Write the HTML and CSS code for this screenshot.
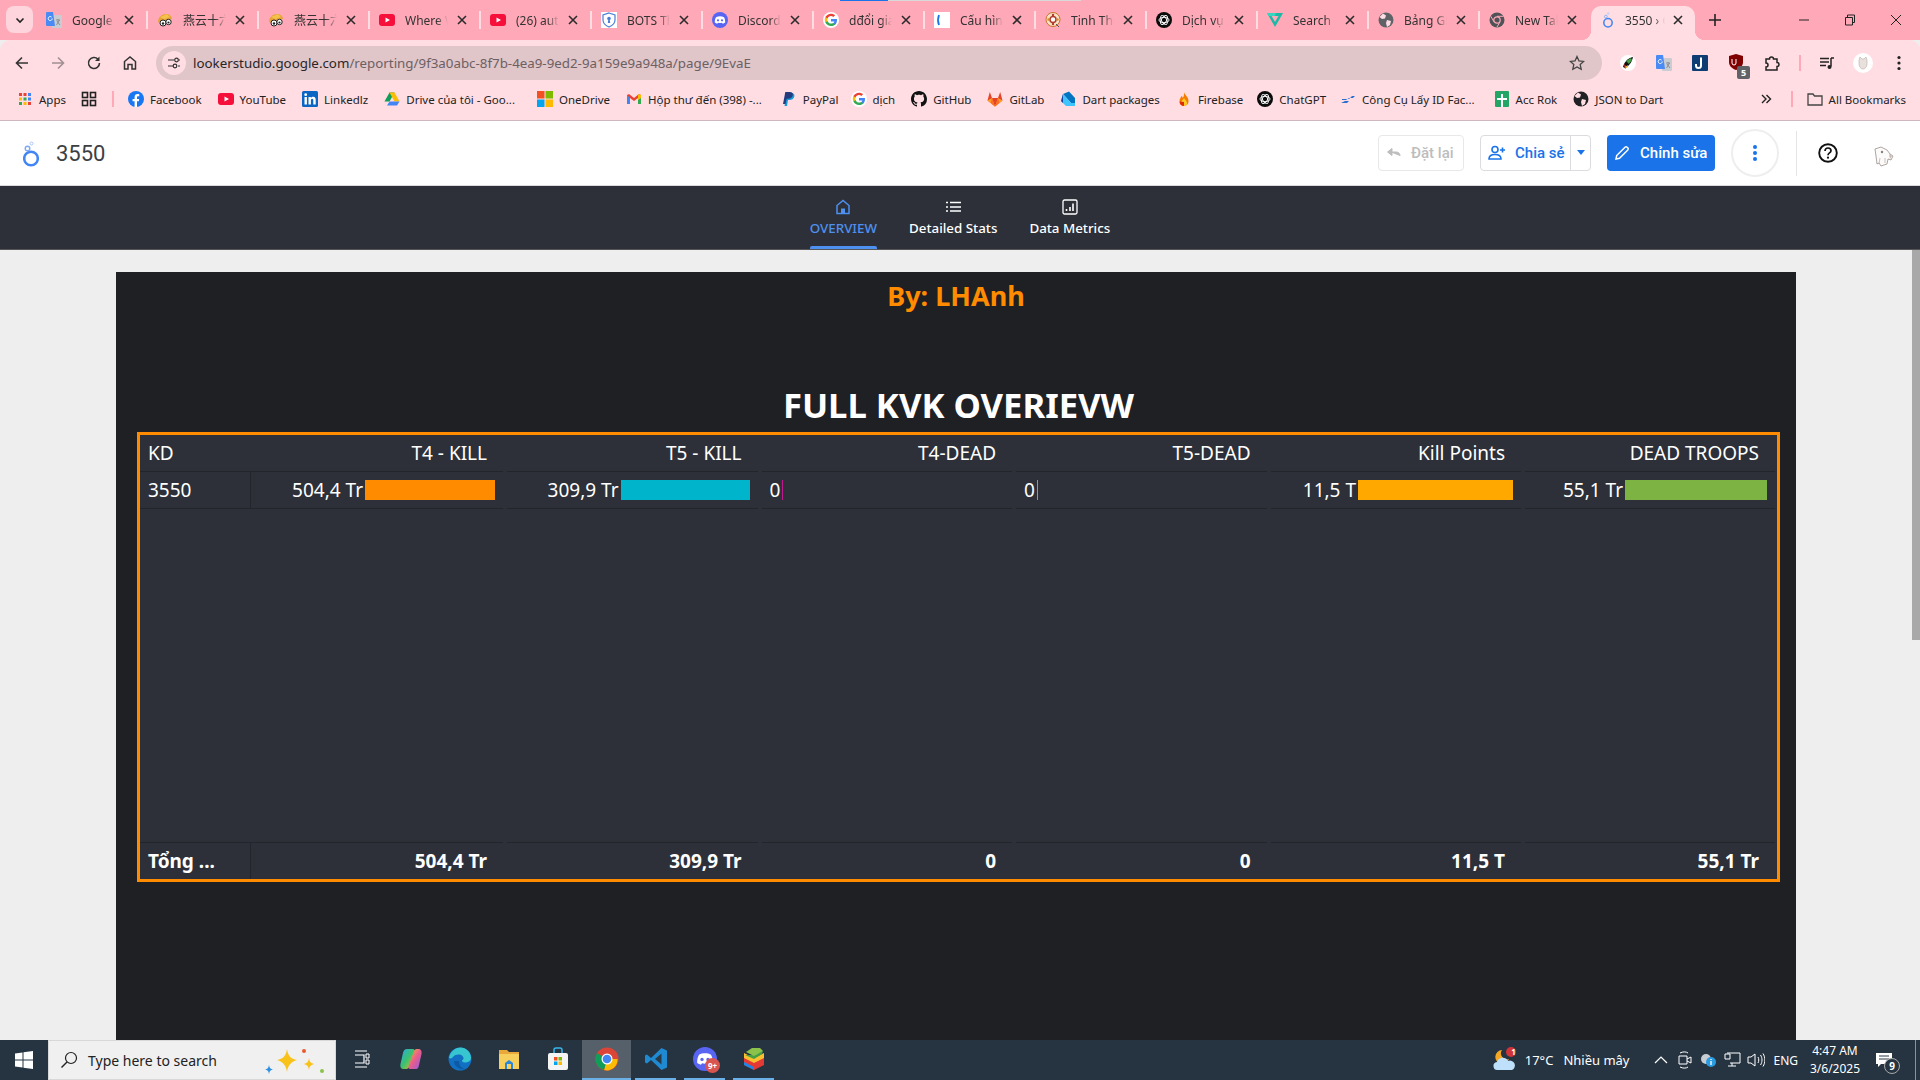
FILE: index.html
```html
<!DOCTYPE html>
<html lang="vi">
<head>
<meta charset="utf-8">
<title>3550</title>
<link rel="stylesheet" href="styles.css">
</head>
<body>
<svg class="defs" width="0" height="0" aria-hidden="true">
<defs>
<symbol id="i-x" viewBox="0 0 10 10"><path d="M1 1l8 8M9 1L1 9" stroke="#2b2b2b" stroke-width="1.6" fill="none"/></symbol>
<symbol id="i-translate" viewBox="0 0 16 16"><rect x="6" y="3" width="10" height="13" rx="1" fill="#c9cdd2"/><path d="M10 8h4M12 7v1M10.500 13l3-5M11 9l3 4" stroke="#7d8287" stroke-width=".8" fill="none"/><path d="M1 0h6l2 14H1a1 1 0 0 1-1-1V1a1 1 0 0 1 1-1z" fill="#4a8af4"/><path d="M6.200 6.500a2 2 0 1 1-.6-1.400" stroke="#fff" stroke-width="1" fill="none"/></symbol>
<symbol id="i-mascot" viewBox="0 0 16 16"><path d="M1 10c0-5 4-8 8-8 3 0 6 2 6 5l-6 1-5 3z" fill="#e7a33a"/><path d="M3 5l7-3 3 3-6 2z" fill="#f2c24b"/><circle cx="6" cy="11" r="3" fill="#fff" stroke="#222"/><circle cx="11.500" cy="10" r="2.700" fill="#fff" stroke="#222"/><circle cx="6" cy="11.500" r="1.200" fill="#222"/><circle cx="11.500" cy="10.500" r="1.100" fill="#222"/></symbol>
<symbol id="i-yt" viewBox="0 0 16 16"><rect y="2" width="16" height="12" rx="3" fill="#f50f3a"/><path d="M6.500 5.500v5L11 8z" fill="#fff"/></symbol>
<symbol id="i-shield" viewBox="0 0 16 16"><rect width="16" height="16" fill="#fff"/><path d="M8 1l6 2v5c0 3.500-2.500 5.500-6 7-3.500-1.500-6-3.500-6-7V3z" fill="#fff" stroke="#4a7fd4" stroke-width="1.200"/><circle cx="8" cy="6.500" r="1.800" fill="#4a7fd4"/><path d="M7.300 7.500h1.400l.5 3.500H6.800z" fill="#4a7fd4"/></symbol>
<symbol id="i-discord" viewBox="0 0 16 16"><circle cx="8" cy="8" r="8" fill="#5865f2"/><path d="M4 5.200c2.500-1.300 5.500-1.300 8 0 1 1.800 1.300 3.600 1.200 5.400-.8.600-1.600 1-2.500 1.200l-.7-1c-1.300.4-2.700.4-4 0l-.7 1c-.9-.2-1.700-.6-2.500-1.200C2.700 8.800 3 7 4 5.200z" fill="#fff"/><circle cx="6" cy="8.300" r="1.100" fill="#5865f2"/><circle cx="10" cy="8.300" r="1.100" fill="#5865f2"/></symbol>
<symbol id="i-g" viewBox="0 0 16 16"><circle cx="8" cy="8" r="8" fill="#fff"/><path d="M14 8.200c0-.5 0-.9-.1-1.300H8v2.500h3.400c-.2.800-.6 1.400-1.300 1.900v1.500h2c1.200-1.100 1.900-2.700 1.900-4.600z" fill="#4285f4"/><path d="M8 14c1.700 0 3-.5 4.100-1.500l-2-1.500c-.6.400-1.300.6-2.100.6-1.600 0-3-1.100-3.500-2.600H2.400v1.600C3.500 12.700 5.600 14 8 14z" fill="#34a853"/><path d="M4.500 9c-.3-.8-.3-1.600 0-2.400V5H2.400c-.8 1.700-.8 3.700 0 5.400z" fill="#fbbc05"/><path d="M8 4.100c.9 0 1.700.3 2.300.9L12.100 3.200C11 2.200 9.600 1.700 8 1.700 5.600 1.700 3.500 3 2.400 5l2.100 1.600C5 5.200 6.400 4.100 8 4.100z" fill="#ea4335"/></symbol>
<symbol id="i-cau" viewBox="0 0 16 16"><rect width="16" height="16" fill="#fff"/><path d="M5 3C3.800 6 3.800 10 5 13" stroke="#1a73e8" stroke-width="1.800" fill="none"/></symbol>
<symbol id="i-wheel" viewBox="0 0 16 16"><circle cx="8" cy="7.500" r="7" fill="#f8e2c6" stroke="#c9722d"/><circle cx="8" cy="7.500" r="3" fill="#fff" stroke="#b13b2b" stroke-width="1.500"/><circle cx="8" cy="3" r="1.200" fill="#b13b2b"/><circle cx="12.500" cy="7.500" r="1.200" fill="#d68a2d"/><circle cx="3.500" cy="7.500" r="1.200" fill="#d68a2d"/><circle cx="8" cy="12" r="1.200" fill="#b13b2b"/><path d="M11 12l3 3" stroke="#555"/></symbol>
<symbol id="i-gpt" viewBox="0 0 16 16"><circle cx="8" cy="8" r="8" fill="#0b0b0b"/><g fill="none" stroke="#fff" stroke-width=".9"><ellipse cx="8" cy="8" rx="5" ry="2.600"/><ellipse cx="8" cy="8" rx="5" ry="2.600" transform="rotate(60 8 8)"/><ellipse cx="8" cy="8" rx="5" ry="2.600" transform="rotate(120 8 8)"/></g></symbol>
<symbol id="i-vuet" viewBox="0 0 16 16"><path d="M0 1h16L8 15z" fill="#1bb9a6"/><path d="M4.500 4h7L8 10z" fill="#ffa9b8"/><path d="M0 1h9L8 4H2z" fill="#37d6c0"/></symbol>
<symbol id="i-globe" viewBox="0 0 16 16"><circle cx="8" cy="8" r="7.500" fill="#5f6368"/><path d="M5 1.500l3 2-1 3-3 .5-2.500-2zM9 8l4 1-1 4-3 2-1-4z" fill="#ffdde3"/></symbol>
<symbol id="i-chrome-m" viewBox="0 0 16 16"><circle cx="8" cy="8" r="7.500" fill="#4f5256"/><circle cx="8" cy="8" r="3.200" fill="#4f5256" stroke="#ffa9b8" stroke-width="1.200"/><path d="M8 4.300h6.500M5 9.800L1.800 4.300M11 9.800L8 15" stroke="#ffa9b8" stroke-width="1"/></symbol>
<symbol id="i-looker" viewBox="0 0 16 26"><circle cx="8" cy="17.500" r="6.800" fill="none" stroke="#4285f4" stroke-width="2.500"/><circle cx="4.500" cy="7.500" r="2.300" fill="none" stroke="#7fa9f5" stroke-width="1.400"/><circle cx="8.500" cy="2.500" r="1.500" fill="none" stroke="#aac6f8" stroke-width="1"/></symbol>
<symbol id="i-fb" viewBox="0 0 16 16"><circle cx="8" cy="8" r="8" fill="#1877f2"/><path d="M10.800 10.300l.4-2.300H9V6.500c0-.7.300-1.200 1.300-1.200h1V3.300S10.400 3.100 9.500 3.100C7.700 3.100 6.600 4.200 6.600 6.200V8h-2v2.300h2V16h2.400v-5.700z" fill="#fff"/></symbol>
<symbol id="i-in" viewBox="0 0 16 16"><rect width="16" height="16" rx="1.500" fill="#0a66c2"/><rect x="2.500" y="6" width="2.400" height="7.500" fill="#fff"/><circle cx="3.700" cy="3.700" r="1.400" fill="#fff"/><path d="M6.500 6h2.300v1.100C9.200 6.400 10 5.800 11.200 5.800c2 0 2.500 1.300 2.500 3.200v4.500h-2.400v-4c0-1-.2-1.700-1.100-1.700-1 0-1.300.7-1.300 1.700v4H6.500z" fill="#fff"/></symbol>
<symbol id="i-drive" viewBox="0 0 16 16"><path d="M5.500 1.500h5L5.500 10.500H0.500z" fill="#0f9d58"/><path d="M10.500 1.500l5 9h-5l-5-9z" fill="#fbbc04"/><path d="M3 14.500l2.500-4h10l-2.500 4z" fill="#4285f4"/></symbol>
<symbol id="i-ms" viewBox="0 0 16 16"><rect width="7.500" height="7.500" fill="#f25022"/><rect x="8.500" width="7.500" height="7.500" fill="#7fba00"/><rect y="8.500" width="7.500" height="7.500" fill="#00a4ef"/><rect x="8.500" y="8.500" width="7.500" height="7.500" fill="#ffb900"/></symbol>
<symbol id="i-gmail" viewBox="0 0 16 16"><path d="M1 4v9h3V7l4 3 4-3v6h3V4l-2-1-5 4-5-4z" fill="#ea4335"/><path d="M1 4v9h3V7z" fill="#4285f4"/><path d="M15 4v9h-3V7z" fill="#34a853"/><path d="M13 3l2 1v3l-3 2V4z" fill="#fbbc04"/></symbol>
<symbol id="i-paypal" viewBox="0 0 16 16"><path d="M6 15H3.500L5.800 2h4.500c2.500 0 3.500 1.500 3 3.500-.6 2.500-2.500 3.500-5 3.500H7z" fill="#169bd7"/><path d="M4.500 13H2L4.300 1h4.500c2.500 0 3.500 1.300 3 3.300-.5 2.500-2.500 3.400-5 3.400H5.600z" fill="#253b80"/></symbol>
<symbol id="i-gh" viewBox="0 0 16 16"><path fill="#111" d="M8 0C3.580 0 0 3.580 0 8c0 3.540 2.290 6.530 5.470 7.590.4.070.55-.17.55-.38 0-.19-.01-.82-.01-1.490-2.010.37-2.530-.49-2.690-.94-.09-.23-.48-.94-.82-1.130-.28-.15-.68-.52-.01-.53.63-.01 1.080.58 1.230.82.72 1.210 1.870.87 2.330.66.07-.52.28-.87.51-1.070-1.780-.2-3.640-.89-3.640-3.950 0-.87.31-1.590.82-2.150-.08-.2-.36-1.020.08-2.120 0 0 .67-.21 2.200.82.64-.18 1.320-.27 2-.27s1.360.09 2 .27c1.530-1.040 2.200-.82 2.200-.82.44 1.100.16 1.920.08 2.120.51.56.82 1.270.82 2.150 0 3.070-1.870 3.750-3.650 3.950.29.25.54.73.54 1.480 0 1.070-.01 1.930-.01 2.200 0 .21.15.46.55.38A8.013 8.013 0 0 0 16 8c0-4.420-3.580-8-8-8z"/></symbol>
<symbol id="i-gl" viewBox="0 0 16 16"><path d="M8 15.500L.5 9.500 2.800 1l2.200 6h6l2.200-6 2.300 8.500z" fill="#e24329"/><path d="M8 15.500L5 7h6z" fill="#e24329"/><path d="M8 15.500L.5 9.500 5 7zM8 15.500l7.500-6L11 7z" fill="#fca326"/><path d="M8 15.500L3.500 11.500 5 7zM8 15.500l4.500-4L11 7z" fill="#fc6d26"/></symbol>
<symbol id="i-dart" viewBox="0 0 16 16"><path d="M3 3l6-2.500 6 6.500v5h-4z" fill="#0175c2"/><path d="M3 3l8 9h4v3H6L1 10z" fill="#40c4ff"/><path d="M3 3L1 10l2 2z" fill="#0d47a1"/></symbol>
<symbol id="i-fire" viewBox="0 0 16 16"><path d="M8 1c.5 3 4.500 4.500 4.500 9A4.500 4.500 0 0 1 8 15a4.500 4.500 0 0 1-4.500-5C3.500 7.500 5 6.500 5.500 5c1 .7 1.200 1.500 1.200 2C8 5.500 8.300 3 8 1z" fill="#f57c00"/><path d="M8 7c1 2 3 3 3 5a3 3 0 0 1-6 0c0-2 2-3 3-5z" fill="#ffca28"/><path d="M3.700 10.500A4.500 4.500 0 0 0 8 15v-4z" fill="#dd2c00"/></symbol>
<symbol id="i-cc" viewBox="0 0 16 16"><path d="M2 8h7l3-3h3l-2 2H9L6 9H2z" fill="#2a6fd0"/><path d="M1 12h6l2-2H5z" fill="#2a6fd0"/></symbol>
<symbol id="i-sheet" viewBox="0 0 16 16"><rect x="1" width="14" height="16" rx="1" fill="#23a566"/><path d="M7 3h2v4h4v2H9v7H7V9H3V7h4z" fill="#fff"/></symbol>
<symbol id="i-globe-d" viewBox="0 0 16 16"><circle cx="8" cy="8" r="7.500" fill="#202124"/><path d="M5 1.500l3 2-1 3-3 .5-2.500-2zM9 8l4 1-1 4-3 2-1-4z" fill="#ffdde3"/></symbol>
</defs>
</svg>

<div class="window">
  <div class="strip">
    <div class="tab-search"><svg width="12" height="12" viewBox="0 0 12 12"><path d="M2.500 4.500L6 8l3.500-3.500" fill="none" stroke="#222" stroke-width="1.600"/></svg></div>
    <div class="tabs">
      <div class="tab"><div class="tab-in"><svg class="fav"><use href="#i-translate"/></svg><span class="tab-t">Google T</span><svg class="x"><use href="#i-x"/></svg></div></div>
      <div class="tab"><div class="tab-in"><svg class="fav"><use href="#i-mascot"/></svg><span class="tab-t">燕云十六声</span><svg class="x"><use href="#i-x"/></svg></div></div>
      <div class="tab"><div class="tab-in"><svg class="fav"><use href="#i-mascot"/></svg><span class="tab-t">燕云十六声</span><svg class="x"><use href="#i-x"/></svg></div></div>
      <div class="tab"><div class="tab-in"><svg class="fav"><use href="#i-yt"/></svg><span class="tab-t">Where W</span><svg class="x"><use href="#i-x"/></svg></div></div>
      <div class="tab"><div class="tab-in"><svg class="fav"><use href="#i-yt"/></svg><span class="tab-t">(26) auto</span><svg class="x"><use href="#i-x"/></svg></div></div>
      <div class="tab"><div class="tab-in"><svg class="fav"><use href="#i-shield"/></svg><span class="tab-t">BOTS Th</span><svg class="x"><use href="#i-x"/></svg></div></div>
      <div class="tab"><div class="tab-in"><svg class="fav"><use href="#i-discord"/></svg><span class="tab-t">Discord</span><svg class="x"><use href="#i-x"/></svg></div></div>
      <div class="tab"><div class="tab-in"><svg class="fav"><use href="#i-g"/></svg><span class="tab-t">dđổi giao</span><svg class="x"><use href="#i-x"/></svg></div></div>
      <div class="tab"><div class="tab-in"><svg class="fav"><use href="#i-cau"/></svg><span class="tab-t">Cấu hình</span><svg class="x"><use href="#i-x"/></svg></div></div>
      <div class="tab"><div class="tab-in"><svg class="fav"><use href="#i-wheel"/></svg><span class="tab-t">Tinh Thể</span><svg class="x"><use href="#i-x"/></svg></div></div>
      <div class="tab"><div class="tab-in"><svg class="fav"><use href="#i-gpt"/></svg><span class="tab-t">Dịch vụ</span><svg class="x"><use href="#i-x"/></svg></div></div>
      <div class="tab"><div class="tab-in"><svg class="fav"><use href="#i-vuet"/></svg><span class="tab-t">Search</span><svg class="x"><use href="#i-x"/></svg></div></div>
      <div class="tab"><div class="tab-in"><svg class="fav"><use href="#i-globe"/></svg><span class="tab-t">Bảng Gi</span><svg class="x"><use href="#i-x"/></svg></div></div>
      <div class="tab tab-last"><div class="tab-in"><svg class="fav"><use href="#i-chrome-m"/></svg><span class="tab-t">New Tab</span><svg class="x"><use href="#i-x"/></svg></div></div>
      <div class="tab tab-active"><div class="tab-in"><svg class="fav"><use href="#i-looker"/></svg><span class="tab-t">3550 › Ch</span><svg class="x"><use href="#i-x"/></svg></div></div>
    </div>
    <svg class="plus" width="14" height="14" viewBox="0 0 14 14"><path d="M7 1v12M1 7h12" stroke="#222" stroke-width="1.600"/></svg>
    <div class="winctl">
      <svg width="12" height="12" viewBox="0 0 12 12"><path d="M1 6h10" stroke="#222"/></svg>
      <svg width="12" height="12" viewBox="0 0 12 12"><path d="M3.500 3V1h7v7.500H8.500M1.500 3.500h7v7.500h-7z" fill="none" stroke="#222"/></svg>
      <svg width="12" height="12" viewBox="0 0 12 12"><path d="M1 1l10 10M11 1L1 11" stroke="#222"/></svg>
    </div>
  </div>
  <div class="line-progress"></div>

  <div class="toolbar">
    <div class="tb"><svg width="16" height="16" viewBox="0 0 16 16"><path d="M14 8H2.500M8 2.500L2.500 8 8 13.500" fill="none" stroke="#333" stroke-width="1.600"/></svg></div>
    <div class="tb"><svg width="16" height="16" viewBox="0 0 16 16"><path d="M2 8h11.500M8 2.500L13.500 8 8 13.500" fill="none" stroke="#a08f93" stroke-width="1.600"/></svg></div>
    <div class="tb"><svg width="16" height="16" viewBox="0 0 16 16"><path d="M13.500 8A5.500 5.500 0 1 1 12 4.200" fill="none" stroke="#333" stroke-width="1.600"/><path d="M13.500 1.500V6H9z" fill="#333"/></svg></div>
    <div class="tb"><svg width="16" height="16" viewBox="0 0 16 16"><path d="M2.500 14V6.500L8 2l5.500 4.500V14H10V9.500H6V14z" fill="none" stroke="#333" stroke-width="1.500"/></svg></div>
    <div class="omni">
      <div class="site"><svg width="14" height="14" viewBox="0 0 14 14"><g fill="none" stroke="#333" stroke-width="1.200"><path d="M1 4h6M11 10h2M1 10h5"/><circle cx="9.500" cy="4" r="1.800"/><circle cx="8" cy="10" r="1.800"/><path d="M11.500 4H13"/></g></svg></div>
      <div class="url"><span class="host">lookerstudio.google.com</span>/reporting/9f3a0abc-8f7b-4ea9-9ed2-9a159e9a948a/page/9EvaE</div>
      <svg class="star" width="16" height="16" viewBox="0 0 16 16"><path d="M8 1.500l2 4.400 4.700.5-3.500 3.200 1 4.700L8 12l-4.200 2.300 1-4.700L1.300 6.400 6 5.900z" fill="none" stroke="#444" stroke-width="1.300"/></svg>
    </div>
    <div class="tb"><svg width="16" height="16" viewBox="0 0 16 16"><circle cx="8" cy="8" r="8" fill="#fff"/><path d="M3 12C4 7 8 3 13 2c-1 5-4 9-8 11z" fill="#111"/><path d="M4 9l3 3-2 2z" fill="#e53935"/><path d="M6 6l3 3 3-4-1-2z" fill="#43a047"/><path d="M5 12l3-2-1 3z" fill="#fbc02d"/></svg></div>
    <div class="tb"><svg class="fav"><use href="#i-translate"/></svg></div>
    <div class="tb"><svg width="16" height="16" viewBox="0 0 16 16"><rect width="16" height="16" rx="1" fill="#0f3d73"/><path d="M9 2.500v8a2.500 2.500 0 0 1-5 0V9" fill="none" stroke="#fff" stroke-width="2"/></svg></div>
    <div class="tb tb-ub"><svg width="16" height="16" viewBox="0 0 16 16"><path d="M8 0l7 2v6c0 4-3 6.500-7 8-4-1.500-7-4-7-8V2z" fill="#800000"/><path d="M4 5v4a2 2 0 0 0 4 0V5" stroke="#fff" stroke-width="1" fill="none"/></svg><span class="ub-badge">5</span></div>
    <div class="tb"><svg width="18" height="18" viewBox="0 0 18 18"><path d="M3 5h3.500a2 2 0 0 1 4 0H14v3.500a2 2 0 0 1 0 4V16H3v-3a2 2 0 0 0 0-4z" fill="none" stroke="#222" stroke-width="1.500"/></svg></div>
    <div class="tb-sep"></div>
    <div class="tb"><svg width="16" height="16" viewBox="0 0 16 16"><path d="M1 3.500h9M1 7h9M1 10.500h6" stroke="#222" stroke-width="1.500"/><path d="M12 3v8.500" stroke="#222" stroke-width="1.500"/><circle cx="10.500" cy="12" r="2" fill="#222"/><path d="M12 3h3" stroke="#222" stroke-width="1.500"/></svg></div>
    <div class="tb"><svg width="20" height="20" viewBox="0 0 20 20"><circle cx="10" cy="10" r="10" fill="#fff"/><path d="M6 7l1-3 2 2h2l2-2 1 3v4c0 3-2 5-4 5s-4-2-4-5z" fill="#e8e0dc" stroke="#b9aca6" stroke-width=".6"/></svg></div>
    <div class="tb"><svg width="4" height="16" viewBox="0 0 4 16"><circle cx="2" cy="2.500" r="1.600" fill="#222"/><circle cx="2" cy="8" r="1.600" fill="#222"/><circle cx="2" cy="13.500" r="1.600" fill="#222"/></svg></div>
  </div>

  <div class="bookmarks">
    <div class="bm"><svg class="fav" viewBox="0 0 16 16"><g><rect x="2" y="2" width="3" height="3" fill="#ea4335"/><rect x="6.500" y="2" width="3" height="3" fill="#ea4335"/><rect x="11" y="2" width="3" height="3" fill="#4285f4"/><rect x="2" y="6.500" width="3" height="3" fill="#fbbc04"/><rect x="6.500" y="6.500" width="3" height="3" fill="#34a853"/><rect x="11" y="6.500" width="3" height="3" fill="#4285f4"/><rect x="2" y="11" width="3" height="3" fill="#34a853"/><rect x="6.500" y="11" width="3" height="3" fill="#fbbc04"/><rect x="11" y="11" width="3" height="3" fill="#ea4335"/></g></svg><span>Apps</span></div>
    <svg class="fav bm-grid" viewBox="0 0 16 16"><g fill="none" stroke="#222" stroke-width="1.600"><rect x="1.500" y="1.500" width="5" height="5"/><rect x="9.500" y="1.500" width="5" height="5"/><rect x="1.500" y="9.500" width="5" height="5"/><rect x="9.500" y="9.500" width="5" height="5"/></g></svg>
    <div class="bm-sep"></div>
    <div class="bm"><svg class="fav"><use href="#i-fb"/></svg><span>Facebook</span></div>
    <div class="bm"><svg class="fav"><use href="#i-yt"/></svg><span>YouTube</span></div>
    <div class="bm"><svg class="fav"><use href="#i-in"/></svg><span>Linkedlz</span></div>
    <div class="bm bm-drive"><svg class="fav"><use href="#i-drive"/></svg><span>Drive của tôi - Goo...</span></div>
    <div class="bm"><svg class="fav"><use href="#i-ms"/></svg><span>OneDrive</span></div>
    <div class="bm bm-gmail"><svg class="fav"><use href="#i-gmail"/></svg><span>Hộp thư đến (398) -...</span></div>
    <div class="bm bm-paypal"><svg class="fav"><use href="#i-paypal"/></svg><span>PayPal</span></div>
    <div class="bm"><svg class="fav"><use href="#i-g"/></svg><span>dịch</span></div>
    <div class="bm"><svg class="fav"><use href="#i-gh"/></svg><span>GitHub</span></div>
    <div class="bm"><svg class="fav"><use href="#i-gl"/></svg><span>GitLab</span></div>
    <div class="bm"><svg class="fav"><use href="#i-dart"/></svg><span>Dart packages</span></div>
    <div class="bm bm-fire"><svg class="fav"><use href="#i-fire"/></svg><span>Firebase</span></div>
    <div class="bm bm-gpt"><svg class="fav"><use href="#i-gpt"/></svg><span>ChatGPT</span></div>
    <div class="bm bm-cc"><svg class="fav"><use href="#i-cc"/></svg><span>Công Cụ Lấy ID Fac...</span></div>
    <div class="bm"><svg class="fav"><use href="#i-sheet"/></svg><span>Acc Rok</span></div>
    <div class="bm"><svg class="fav"><use href="#i-globe-d"/></svg><span>JSON to Dart</span></div>
    <div class="bm-right">
      <svg width="12" height="12" viewBox="0 0 12 12"><path d="M2 2l4 4-4 4M6.500 2l4 4-4 4" fill="none" stroke="#222" stroke-width="1.400"/></svg>
      <div class="bm-sep"></div>
      <div class="bm"><svg class="fav" viewBox="0 0 16 16"><path d="M1 3h5l1.500 2H15v9H1z" fill="none" stroke="#444" stroke-width="1.300"/></svg><span>All Bookmarks</span></div>
    </div>
  </div>

  <header class="ls-head">
    <svg class="ls-logo" width="16" height="26"><use href="#i-looker"/></svg>
    <div class="ls-title">3550</div>
    <div class="ls-actions">
      <div class="btn btn-off"><svg width="16" height="16" viewBox="0 0 16 16"><path d="M4 7h6c2.500 0 4 1.500 4 4M1.500 7L6 3.500v7z" fill="#bdbdbd" stroke="#bdbdbd"/></svg><span>Đặt lại</span></div>
      <div class="btn-group">
        <div class="btn-main"><svg width="18" height="16" viewBox="0 0 18 16"><circle cx="7" cy="4.500" r="3" fill="none" stroke="#1a73e8" stroke-width="1.600"/><path d="M1 14c0-3 2.500-4.500 6-4.500s6 1.500 6 4.500z" fill="none" stroke="#1a73e8" stroke-width="1.600"/><path d="M14.500 2.500v5M12 5h5" stroke="#1a73e8" stroke-width="1.600"/></svg><span>Chia sẻ</span></div>
        <div class="btn-drop"><svg width="10" height="6" viewBox="0 0 10 6"><path d="M1 0h8L5 5z" fill="#1a73e8"/></svg></div>
      </div>
      <div class="btn-edit"><svg width="16" height="16" viewBox="0 0 16 16"><path d="M2 14l.7-3.500L11 2.200a1.500 1.500 0 0 1 2.100 0l.7.7a1.500 1.500 0 0 1 0 2.100L5.500 13.300z" fill="none" stroke="#fff" stroke-width="1.500"/></svg><span>Chỉnh sửa</span></div>
      <div class="btn-more"><svg width="4" height="16" viewBox="0 0 4 16"><circle cx="2" cy="2" r="2" fill="#1a73e8"/><circle cx="2" cy="8" r="2" fill="#1a73e8"/><circle cx="2" cy="14" r="2" fill="#1a73e8"/></svg></div>
      <div class="ls-sep"></div>
      <svg class="ls-help" width="20" height="20" viewBox="0 0 20 20"><circle cx="10" cy="10" r="8.800" fill="none" stroke="#111" stroke-width="1.900"/><path d="M7 8c0-1.800 1.300-3 3-3s3 1.100 3 2.700c0 2.200-3 2.300-3 4.500" fill="none" stroke="#111" stroke-width="1.700"/><circle cx="10" cy="14.700" r="1.100" fill="#111"/></svg>
      <svg class="ls-avatar" width="26" height="26" viewBox="0 0 26 26"><path d="M5 6l6-2 6 3 3 4 3 2-2 4-3-1-1 5-6 2-2-3-2 1-1-8z" fill="#fbfbfb" stroke="#9c8e88" stroke-width=".8"/><circle cx="12" cy="9" r="1.200" fill="#8d7d77"/><path d="M19 11l3 2-2 3z" fill="#c7b8b0"/><path d="M9 21l1-6M15 20l0-5" stroke="#b5a8a2" stroke-width=".7"/></svg>
    </div>
  </header>

  <nav class="ls-nav">
    <div class="nav-item nav-on">
      <svg width="16" height="16" viewBox="0 0 16 16"><path d="M2 14.500V6.500L8 1.500l6 5v8H2z" fill="none" stroke="#4d90f0" stroke-width="1.500"/><rect x="6" y="9.500" width="4" height="5" fill="#4d90f0"/></svg>
      <span>OVERVIEW</span>
    </div>
    <div class="nav-item">
      <svg width="16" height="16" viewBox="0 0 16 16"><path d="M1 3.500h2M1 8h2M1 12h2M5 3.500h11M5 8h11M5 12h11" stroke="#fff" stroke-width="1.700"/></svg>
      <span>Detailed Stats</span>
    </div>
    <div class="nav-item">
      <svg width="16" height="16" viewBox="0 0 16 16"><rect x="1" y="1" width="14" height="14" rx="1.500" fill="none" stroke="#fff" stroke-width="1.300"/><path d="M4.500 12v-2M8 12V8M11 12V4.500" stroke="#fff" stroke-width="1.600"/></svg>
      <span>Data Metrics</span>
    </div>
  </nav>

  <main class="canvas">
    <div class="report">
      <div class="byline">By: LHAnh</div>
      <h1 class="rp-title">FULL KVK OVERIEVW</h1>
      <div class="grid">
        <div class="cell head first">KD</div>
        <div class="cell head">T4 - KILL</div>
        <div class="cell head">T5 - KILL</div>
        <div class="cell head">T4-DEAD</div>
        <div class="cell head">T5-DEAD</div>
        <div class="cell head">Kill Points</div>
        <div class="cell head last">DEAD TROOPS</div>

        <div class="cell val first div">3550</div>
        <div class="cell val"><span>504,4 Tr</span><i class="bar" style="width:130px;background:#ff8c00"></i></div>
        <div class="cell val"><span>309,9 Tr</span><i class="bar" style="width:129px;background:#00b4cc"></i></div>
        <div class="cell val zero"><span>0</span><i class="bar" style="width:1px;background:#c2188f"></i></div>
        <div class="cell val zero"><span>0</span><i class="bar" style="width:1px;background:#e8811a"></i></div>
        <div class="cell val"><span>11,5 T</span><i class="bar" style="width:155px;background:#ffa800"></i></div>
        <div class="cell val last"><span>55,1 Tr</span><i class="bar" style="width:142px;background:#7cb342"></i></div>

        <div class="filler"></div>

        <div class="cell foot first div">Tổng ...</div>
        <div class="cell foot">504,4 Tr</div>
        <div class="cell foot">309,9 Tr</div>
        <div class="cell foot">0</div>
        <div class="cell foot">0</div>
        <div class="cell foot">11,5 T</div>
        <div class="cell foot last">55,1 Tr</div>
      </div>
    </div>
    <div class="scroll-thumb"></div>
  </main>

  <footer class="taskbar">
    <div class="start"><svg width="18" height="18" viewBox="0 0 18 18"><path d="M0 2.500l7.500-1v7H0zM8.500 1.300L18 0v8.500H8.500zM0 9.500h7.500v7l-7.500-1zM8.500 9.500H18V18l-9.500-1.300z" fill="#fff"/></svg></div>
    <div class="tsearch">
      <svg width="18" height="18" viewBox="0 0 18 18"><circle cx="11" cy="7" r="5.500" fill="none" stroke="#222" stroke-width="1.200"/><path d="M7 11l-5.500 5.500" stroke="#222" stroke-width="1.400"/></svg>
      <span>Type here to search</span>
      <svg class="sparkle" width="64" height="36" viewBox="0 0 64 36"><path d="M26 6c1 7 4 10 10 11-6 2-9 5-10 12-1-7-4-10-10-12 6-1 9-4 10-11z" fill="#f9c21b"/><path d="M48 15c.5 4 2 5 5 6-3 1-4.500 2-5 6-.5-4-2-5-5-6 3-1 4.500-2 5-6z" fill="#f9c21b"/><path d="M8 22c.5 3 1.500 4 4 4.500-2.500.5-3.500 1.500-4 4.500-.5-3-1.500-4-4-4.500 2.500-.5 3.500-1.500 4-4.500z" fill="#2b8fe3"/><circle cx="43" cy="8" r="2" fill="#ea5a2d"/><circle cx="61" cy="28" r="2" fill="#8bc34a"/></svg>
    </div>
    <div class="tapps">
      <div class="tapp tapp-first"><svg width="18" height="18" viewBox="0 0 18 18"><path d="M3 1h12M3 17h12M3 5h9v8H3" fill="none" stroke="#fff" stroke-width="1.200"/><path d="M14 4h3v4h-3zM14 10h3v4h-3z" fill="none" stroke="#fff"/></svg></div>
      <div class="tapp"><svg width="24" height="24" viewBox="0 0 24 24"><defs><linearGradient id="cp" x1="0" y1="0" x2="1" y2="1"><stop offset="0" stop-color="#2ca8e8"/><stop offset=".5" stop-color="#3bc26f"/><stop offset="1" stop-color="#f2b422"/></linearGradient><linearGradient id="cp2" x1="0" y1="0" x2="1" y2="1"><stop offset="0" stop-color="#f1c232"/><stop offset=".5" stop-color="#e85d8a"/><stop offset="1" stop-color="#8f5bea"/></linearGradient></defs><path d="M8 2h6c1 0 2 1 1.500 2.500L10 20c-.5 1.500-2 2-3 2H5c-3 0-4-2-3.500-5L4 6c.5-2.500 2-4 4-4z" fill="url(#cp)"/><path d="M17 22h-6c-1 0-2-1-1.500-2.500L15 4c.5-1.500 2-2 3-2h1c3 0 4 2 3.500 5L20 18c-.5 2.500-1 4-3 4z" fill="url(#cp2)"/></svg></div>
      <div class="tapp"><svg width="24" height="24" viewBox="0 0 24 24"><circle cx="12" cy="12" r="11.500" fill="#1270c4"/><path d="M1 11C2 5 7 .5 12.500.5 18 .5 23 5 23 11c0 3-3 4.500-6 4.500-2 0-3-1-3-2 2-1 2-3 .5-4.500-2-2-7-2-9.500 1-1 1-2 2-4 1z" fill="#37c6d0"/><path d="M6 14c0 5 5 9 11 8 -4-1-6-4-6-8z" fill="#0c59a4"/></svg></div>
      <div class="tapp"><svg width="22" height="22" viewBox="0 0 22 22"><path d="M1 2h8l2 2h10v4H1z" fill="#e8a93a"/><rect x="1" y="6" width="20" height="15" fill="#f7cf5c"/><path d="M7 21v-6l4-3 4 3v6z" fill="#2b88d8"/><rect x="9" y="16" width="4" height="5" fill="#f7cf5c"/></svg></div>
      <div class="tapp"><svg width="22" height="24" viewBox="0 0 22 24"><path d="M7 6V3c0-1 1-2 2-2h4c1 0 2 1 2 2v3" fill="none" stroke="#36b6ea" stroke-width="1.500"/><rect x="1" y="6" width="20" height="17" rx="2" fill="#f4f4f4"/><rect x="7" y="10" width="3.500" height="3.500" fill="#f25022"/><rect x="11.500" y="10" width="3.500" height="3.500" fill="#7fba00"/><rect x="7" y="14.500" width="3.500" height="3.500" fill="#00a4ef"/><rect x="11.500" y="14.500" width="3.500" height="3.500" fill="#ffb900"/></svg></div>
      <div class="tapp tapp-on tapp-run"><svg width="24" height="24" viewBox="0 0 24 24"><circle cx="12" cy="12" r="11.500" fill="#db4437"/><path d="M12 12L22.500 12A10.500 10.500 0 0 1 9 23z" fill="#fbbc05"/><path d="M12 12L9 23A11.500 11.500 0 0 1 2 6z" fill="#0f9d58"/><circle cx="12" cy="12" r="5.500" fill="#fff"/><circle cx="12" cy="12" r="4.300" fill="#4285f4"/></svg></div>
      <div class="tapp tapp-run"><svg width="24" height="24" viewBox="0 0 24 24"><path d="M17.500 1L23 3.500v17L17.500 23 7 13l-4 3.500L1 15.500v-7L3 7.500l4 3.500z" fill="#1f8ad2"/><path d="M17.500 6.500L11 12l6.500 5.500z" fill="#2a3947"/></svg></div>
      <div class="tapp tapp-run tapp-dc"><svg width="24" height="24"><use href="#i-discord"/></svg><span class="dc-badge">9+</span></div>
      <div class="tapp tapp-run"><svg width="24" height="24" viewBox="0 0 24 24"><path d="M12 14l10-5v9l-10 5-10-5V9z" fill="#e53935"/><path d="M12 11l10-5v5l-10 5-10-5V6z" fill="#fbc02d"/><path d="M12 8l9-4-1 3-8 5-9-4z" fill="#43a047"/><path d="M10 1h8l3 3-9 5-8-4z" fill="#8bc34a"/><path d="M2 15l10 5v3L2 18z" fill="#1e88e5"/></svg></div>
    </div>
    <div class="tray">
      <div class="weather"><svg width="26" height="26" viewBox="0 0 26 26"><path d="M10 3a7 7 0 1 0 7 9 6 6 0 0 1-7-9z" fill="#f5a623"/><path d="M6 23a4 4 0 0 1-1-8 6 6 0 0 1 11-1 4.500 4.500 0 0 1 4 9z" fill="#bfe0fa"/><circle cx="19" cy="5" r="5" fill="#d13438"/></svg><b>1</b></div>
      <span class="t-temp">17°C</span>
      <span class="t-sky">Nhiều mây</span>
      <svg class="t-caret" width="14" height="8" viewBox="0 0 14 8"><path d="M1 7l6-6 6 6" fill="none" stroke="#fff" stroke-width="1.200"/></svg>
      <svg class="t-ic" width="16" height="18" viewBox="0 0 16 18"><path d="M2 5h8v8H2zM10 8l4-2v6l-4-2M3 2c3-1.500 6-1.500 8 0M3 16c3 1.500 6 1.500 8 0" fill="none" stroke="#fff"/></svg>
      <svg class="t-ic" width="18" height="16" viewBox="0 0 18 16"><circle cx="7" cy="7" r="5" fill="#c9ccd0"/><circle cx="12" cy="10" r="5" fill="#2b9be0"/><path d="M12 9v4M12 7v1" stroke="#fff" stroke-width="1.300"/></svg>
      <svg class="t-ic" width="18" height="16" viewBox="0 0 18 16"><path d="M4 1h13v10H7M2 2h5v5H2zM5 14h8M9 11v3" fill="none" stroke="#fff"/></svg>
      <svg class="t-ic" width="18" height="16" viewBox="0 0 18 16"><path d="M1 5h3l4-3v12l-4-3H1zM11 5c1 2 1 4 0 6M13.500 3c2 3 2 7 0 10M16 1.500c2.500 4 2.500 9 0 13" fill="none" stroke="#fff"/></svg>
      <span class="t-eng">ENG</span>
      <div class="t-clock"><span>4:47 AM</span><span>3/6/2025</span></div>
      <div class="t-note"><svg width="18" height="16" viewBox="0 0 18 16"><path d="M1 1h16v11H6l-3 3v-3H1z" fill="#fff"/><path d="M4 4h10M4 7h10" stroke="#2a3947"/></svg><b>9</b></div>
      <div class="t-desk"></div>
    </div>
  </footer>
</div>
</body>
</html>
```

FILE: styles.css
```css
* { box-sizing: border-box; }
html, body { margin: 0; padding: 0; height: 100%; overflow: hidden; }
body { font-family: "Noto Sans", "Noto Sans CJK SC", sans-serif; }
.defs { position: absolute; }
.window { width: 1920px; height: 1080px; display: flex; flex-direction: column; background: #eeeeee; position: relative; overflow: hidden; }
svg { display: block; flex: none; }
.fav { width: 16px; height: 16px; }

/* tab strip */
.strip { height: 40px; flex: none; background: #ffa9b8; display: flex; align-items: flex-start; padding-left: 6px; position: relative; }
.tab-search { width: 27px; height: 27px; margin-top: 6px; border-radius: 8px; background: #ffd5dd; display: flex; align-items: center; justify-content: center; margin-right: 4px; }
.tabs { display: flex; height: 40px; }
.tab { width: 111px; height: 40px; display: flex; align-items: center; }
.tab-in { width: 111px; height: 18px; padding-left: 9px; display: flex; align-items: center; border-right: 2px solid #ffdde3; }
.tab-t { width: 43px; margin-left: 10px; margin-right: 9px; overflow: hidden; white-space: nowrap; font-size: 12px; color: #333; -webkit-mask-image: linear-gradient(to right, #000 74%, transparent); mask-image: linear-gradient(to right, #000 74%, transparent); }
.x { width: 10px; height: 10px; }
.tab-last .tab-in { border-right: 0; }
.tab-active { width: 104px; height: 34px; margin-top: 6px; padding-bottom: 6px; background: #ffdde3; border-radius: 10px 10px 0 0; position: relative; }
.tab-active .tab-in { border-right: 0; padding-left: 9px; }
.tab-active .tab-t { width: 40px; margin-left: 9px; margin-right: 8px; }
.tab-active::before, .tab-active::after { content: ""; position: absolute; bottom: 0; width: 10px; height: 10px; }
.tab-active::before { left: -10px; background: radial-gradient(circle at 0 0, #ffa9b8 10px, #ffdde3 10.5px); }
.tab-active::after { right: -10px; background: radial-gradient(circle at 100% 0, #ffa9b8 10px, #ffdde3 10.5px); }
.plus { margin: 13px 0 0 13px; }
.winctl { margin-left: auto; display: flex; gap: 34px; padding: 14px 18px 0 0; }
.line-progress { position: absolute; left: 840px; top: 0; width: 241px; height: 1px; background: linear-gradient(to right, #1a73e8 48px, #d8d8d8 48px); }

/* toolbar */
.toolbar { height: 46px; flex: none; background: #ffdde3; display: flex; align-items: center; padding: 0 0 0 4px; border-radius: 10px 10px 0 0; }
.tb { width: 36px; height: 34px; flex: none; display: flex; align-items: center; justify-content: center; position: relative; }
.omni { width: 1446px; height: 34px; margin: 0 8px; background: #e0c5c9; border-radius: 17px; display: flex; align-items: center; padding: 0 17px 0 6px; flex: none; }
.site { width: 24px; height: 24px; border-radius: 50%; background: #ffdde3; display: flex; align-items: center; justify-content: center; }
.url { margin-left: 7px; font-size: 13.33px; color: #6d6063; flex: 1; white-space: nowrap; }
.host { color: #2a2527; }
.tb-ub svg { margin-top: -2px; }
.ub-badge { position: absolute; left: 19px; top: 20px; width: 13px; height: 13px; background: #5f6368; color: #fff; font-size: 9px; line-height: 13px; text-align: center; border-radius: 2px; font-weight: 700; }
.tb-sep { width: 2px; height: 16px; background: #ffa9b8; margin: 0 8px 0 9px; flex: none; }

/* bookmarks */
.bookmarks { height: 35px; flex: none; background: #ffdde3; border-bottom: 1px solid #cdb9bd; display: flex; align-items: center; padding: 0 0 8px 17px; font-size: 11.5px; color: #222; white-space: nowrap; }
.bm { display: flex; align-items: center; gap: 6px; margin-right: 16px; flex: none; }
.bm-drive { margin-right: 22px; }
.bm-gmail { margin-right: 19px; }
.bm-paypal { margin-right: 12px; }
.bm-fire { margin-right: 14px; }
.bm-gpt { margin-right: 14px; }
.bm-cc { margin-right: 19px; }
.bm-grid { margin: 0 15px 0 -1px; }
.bm-sep { width: 2px; height: 16px; background: #ffa9b8; margin-right: 14px; flex: none; }
.bm-right { margin-left: auto; display: flex; align-items: center; }
.bm-right > svg { margin-right: 19px; }
.bm-right .bm { margin-right: 14px; }

/* looker header */
.ls-head { height: 64px; flex: none; background: #fff; display: flex; align-items: center; padding-left: 23px; }
.ls-logo { margin-right: 17px; margin-top: 2px; }
.ls-title { font-family: Roboto, sans-serif; font-size: 22px; color: #3c4043; }
.ls-actions { margin-left: auto; display: flex; align-items: center; font-family: Roboto, sans-serif; font-size: 15px; font-weight: 500; padding-right: 24px; }
.btn { display: flex; align-items: center; gap: 9px; height: 36px; border-radius: 4px; }
.btn-off { width: 86px; border: 1px solid #e8e8e8; color: #bdbdbd; padding-left: 7px; margin-right: 16px; }
.btn-group { display: flex; width: 111px; height: 36px; border: 1px solid #dadce0; border-radius: 4px; color: #1a73e8; margin-right: 16px; }
.btn-main { flex: 1; display: flex; align-items: center; gap: 9px; padding-left: 7px; border-right: 1px solid #dadce0; }
.btn-drop { width: 19px; display: flex; align-items: center; justify-content: center; }
.btn-edit { width: 108px; height: 36px; background: #1a73e8; color: #fff; border-radius: 4px; display: flex; align-items: center; gap: 10px; padding-left: 7px; margin-right: 16px; }
.btn-more { width: 48px; height: 48px; border: 2px solid #eeeeee; border-radius: 50%; display: flex; align-items: center; justify-content: center; margin-right: 17px; }
.ls-sep { width: 1px; height: 45px; background: #e4e4e4; margin-right: 21px; }
.ls-help { margin-right: 32px; }
.ls-avatar { margin-top: 5px; }

/* report nav */
.ls-nav { height: 65px; flex: none; background: #2d3039; border-top: 1px solid #dadada; border-bottom: 1px solid #555; display: flex; justify-content: center; gap: 32px; color: #fff; font-size: 13.33px; font-weight: 500; }
.nav-item { display: flex; flex-direction: column; align-items: center; padding-top: 13px; gap: 4px; position: relative; white-space: nowrap; }
.nav-on { color: #4d90f0; }
.nav-on::after { content: ""; position: absolute; left: 0; right: 0; bottom: 0; height: 3px; background: #4d90f0; border-radius: 2px 2px 0 0; }

/* canvas */
.canvas { flex: 1; min-height: 0; background: #eeeeee; padding: 22px 0 0 116px; position: relative; overflow: hidden; }
.report { width: 1680px; height: 900px; background: #1f2024; padding: 0 16px 0 21px; }
.byline { height: 48px; padding-right: 5px; color: #ff8c00; font-size: 27px; font-weight: 700; line-height: 48px; text-align: center; }
.rp-title { margin: 0; height: 112px; padding-top: 58px; color: #fff; font-size: 34.67px; font-weight: 700; line-height: 54px; text-align: center; }
.grid { height: 450px; border: 3px solid #ff8c00; background: #2d3039; display: grid; grid-template-columns: 111px 256px repeat(4, 254.5px) 1fr; grid-template-rows: 37px 37px 1fr 37px; color: #fff; }
.cell { display: flex; align-items: center; justify-content: flex-end; margin-right: 4px; white-space: nowrap; }
.first { margin-right: 0; justify-content: flex-start; padding-left: 8px; }
.last { margin-right: 2px; }
.head { font-size: 19px; padding-right: 16px; border-bottom: 1px solid #23252b; }
.head.first { padding-right: 0; }
.val { font-size: 19px; padding-right: 8px; gap: 2px; border-bottom: 1px solid #23252b; }
.val.first { padding-right: 0; }
.zero { justify-content: flex-start; padding-left: 8px; }
.bar { display: block; height: 20px; flex: none; }
.filler { grid-column: 1 / -1; }
.foot { font-size: 19px; font-weight: 700; padding-right: 16px; border-top: 1px solid #23252b; }
.foot.first { padding-right: 0; }
.div { border-right: 1px solid #23252b; }
.scroll-thumb { position: absolute; right: 0; top: 0; width: 8px; height: 390px; background: #a8a8a8; }

/* taskbar */
.taskbar { height: 40px; flex: none; background: #263442; display: flex; align-items: stretch; color: #fff; font-size: 12px; position: relative; }
.start { width: 48px; display: flex; align-items: center; justify-content: center; }
.tsearch { width: 288px; background: #f0f0f0; border: 1px solid #d8d8d8; color: #222; display: flex; align-items: center; padding-left: 11px; font-size: 14px; position: relative; }
.tsearch span { margin-left: 10px; }
.sparkle { position: absolute; right: 10px; top: 2px; }
.tapps { display: flex; }
.tapp { width: 49px; display: flex; align-items: center; justify-content: center; position: relative; padding-bottom: 2px; }
.tapp-first { width: 50px; }
.tapp-on { background: #55606b; }
.tapp-run::after { content: ""; position: absolute; left: 4px; right: 4px; bottom: 0; height: 2px; background: #6cb0e8; }
.tapp-on::after { left: 0; right: 0; }
.tapp-dc svg { width: 24px; height: 24px; }
.dc-badge { position: absolute; left: 25px; top: 18px; width: 15px; height: 15px; border-radius: 50%; background: #d9534f; color: #fff; font-size: 8px; line-height: 15px; text-align: center; font-weight: 700; }
.tray { margin-left: auto; display: flex; align-items: center; position: relative; height: 40px; }
.weather { width: 26px; height: 26px; position: relative; margin-right: 7px; }
.weather b { position: absolute; right: 2px; top: -1px; font-size: 8px; }
.t-temp { font-size: 13px; margin-right: 10px; }
.t-sky { font-size: 13px; margin-right: 25px; }
.t-caret { margin-right: 9px; }
.t-ic { margin-right: 6px; }
.t-eng { font-size: 12px; margin: 0 7px 0 2px; }
.t-clock { display: flex; flex-direction: column; align-items: center; font-size: 12px; line-height: 18px; width: 60px; margin-right: 10px; }
.t-note { width: 24px; position: relative; margin-right: 16px; }
.t-note b { position: absolute; left: 9px; top: 6px; width: 16px; height: 16px; border-radius: 50%; background: #263442; border: 1px solid #aaa; font-size: 10px; line-height: 14px; text-align: center; }
.t-desk { width: 1px; height: 40px; background: #8a939b; margin-right: 4px; }
```
